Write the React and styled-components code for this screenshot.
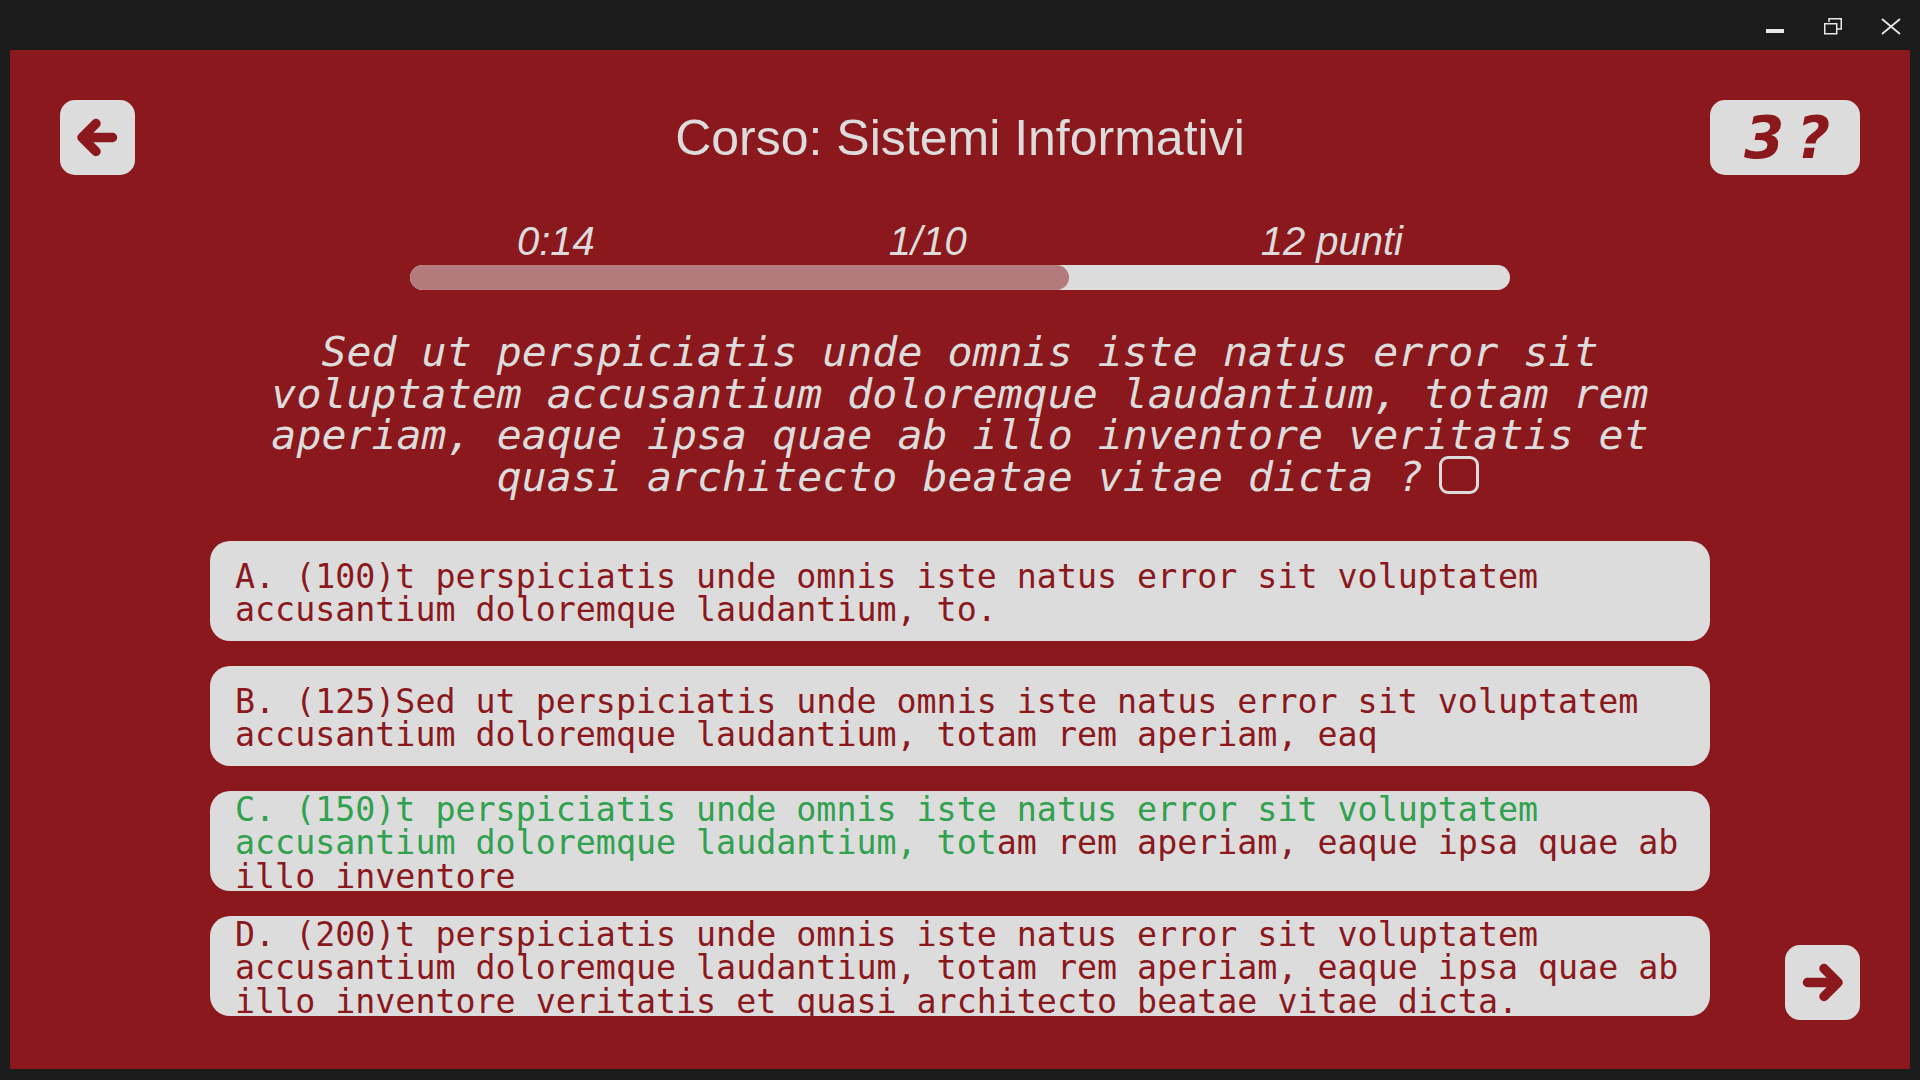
import React from "react";
import styled, { createGlobalStyle } from "styled-components";

const RED = "#8b181c";
const LIGHT = "#dcdcdc";

const GlobalStyle = createGlobalStyle`
  html, body {
    margin: 0;
    padding: 0;
    background: #1c1c1c;
  }
`;

const Frame = styled.div`
  width: 1920px;
  height: 1080px;
  display: flex;
  flex-direction: column;
  background: #1c1c1c;
  overflow: hidden;
`;

const TitleBar = styled.div`
  height: 50px;
  flex-shrink: 0;
  display: flex;
  justify-content: flex-end;
  align-items: flex-start;
`;

const WinButton = styled.div`
  width: 58px;
  height: 50px;
  display: flex;
  justify-content: center;
  padding-top: 16px;
  box-sizing: border-box;
`;

const Window = styled.div`
  flex: 1;
  margin: 0 10px 11px;
  background: ${RED};
  padding: 50px 50px 0;
  box-sizing: border-box;
  display: flex;
  flex-direction: column;
`;

const Header = styled.div`
  height: 75px;
  display: grid;
  grid-template-columns: 150px 1fr 150px;
  align-items: center;
`;

const IconButton = styled.button`
  width: ${(p) => p.$w || 75}px;
  height: 75px;
  border: none;
  padding: 0;
  border-radius: 15px;
  background: ${LIGHT};
  display: grid;
  place-items: center;
  justify-self: ${(p) => p.$side || "start"};
  cursor: pointer;
`;

const Title = styled.h1`
  margin: 0;
  font-family: "Liberation Sans", Arial, sans-serif;
  font-weight: 400;
  font-size: 50px;
  color: ${LIGHT};
  text-align: center;
`;

const HelpText = styled.span`
  font-family: "DejaVu Sans", sans-serif;
  font-weight: bold;
  font-style: italic;
  font-size: 58px;
  color: ${RED};
  letter-spacing: -4px;
  line-height: 1;
`;

const Progress = styled.div`
  width: 1180px;
  margin: 44px auto 0;
  display: flex;
  flex-direction: column;
  align-items: center;
`;

const Labels = styled.div`
  width: 100%;
  display: flex;
  justify-content: space-around;
  font-family: "Liberation Sans", Arial, sans-serif;
  font-style: italic;
  font-size: 40px;
  color: ${LIGHT};
`;

const Bar = styled.div`
  width: 1100px;
  height: 25px;
  margin-top: 1px;
  border-radius: 13px;
  background: ${LIGHT};
  overflow: hidden;
`;

const Fill = styled.div`
  height: 100%;
  border-radius: 13px;
  background: #b37b7b;
`;

const Question = styled.p`
  width: 1500px;
  margin: 41px auto 0;
  font-family: "DejaVu Sans Mono", monospace;
  font-style: italic;
  font-size: 41.6px;
  line-height: 1;
  color: ${LIGHT};
  text-align: center;
`;

const Check = styled.span`
  display: inline-block;
  width: 40px;
  height: 38px;
  box-sizing: border-box;
  border: 3.5px solid ${LIGHT};
  border-radius: 9px;
  margin-left: 16px;
  margin-right: -56px;
  vertical-align: -3px;
`;

const Bottom = styled.div`
  margin-top: 44px;
  display: grid;
  grid-template-columns: 1fr 1500px 1fr;
`;

const Answers = styled.div`
  grid-column: 2;
  display: flex;
  flex-direction: column;
  gap: 25px;
`;

const Answer = styled.div`
  height: 100px;
  display: flex;
  align-items: center;
  padding: 3px 20px 0 25px;
  box-sizing: border-box;
  border-radius: 20px;
  background: ${LIGHT};
  font-family: "DejaVu Sans Mono", monospace;
  font-size: 33.3px;
  line-height: 1;
  color: ${RED};
`;

const Correct = styled.span`
  color: #30a14e;
`;

const NextSlot = styled.div`
  grid-column: 3;
  display: flex;
  justify-content: flex-end;
  align-items: flex-end;
  margin-bottom: -4px;
`;

const Arrow = ({ flip }) => (
  <svg
    width="75"
    height="75"
    viewBox="0 0 75 75"
    style={flip ? { transform: "scaleX(-1)" } : undefined}
  >
    <path
      d="M36 23.5 L22 37.5 L36 51.5 M22 37.5 H52.5"
      fill="none"
      stroke={RED}
      strokeWidth="9.5"
      strokeLinecap="round"
      strokeLinejoin="round"
    />
  </svg>
);

const answers = [
  {
    id: "A",
    parts: [
      [
        "A. (100)t perspiciatis unde omnis iste natus error sit voluptatem accusantium doloremque laudantium, to.",
        false,
      ],
    ],
  },
  {
    id: "B",
    parts: [
      [
        "B. (125)Sed ut perspiciatis unde omnis iste natus error sit voluptatem accusantium doloremque laudantium, totam rem aperiam, eaq",
        false,
      ],
    ],
  },
  {
    id: "C",
    parts: [
      [
        "C. (150)t perspiciatis unde omnis iste natus error sit voluptatem accusantium doloremque laudantium, tot",
        true,
      ],
      ["am rem aperiam, eaque ipsa quae ab illo inventore", false],
    ],
  },
  {
    id: "D",
    parts: [
      [
        "D. (200)t perspiciatis unde omnis iste natus error sit voluptatem accusantium doloremque laudantium, totam rem aperiam, eaque ipsa quae ab illo inventore veritatis et quasi architecto beatae vitae dicta.",
        false,
      ],
    ],
  },
];

const progress = 0.599;

const App = () => {
  return (
    <Frame>
      <GlobalStyle />
      <TitleBar>
        <WinButton>
          <svg width="20" height="20" viewBox="0 0 20 20">
            <rect x="1" y="13" width="18" height="4" fill="#e8e8e8" />
          </svg>
        </WinButton>
        <WinButton>
          <svg width="20" height="20" viewBox="0 0 20 20">
            <path
              d="M6 6 V2.75 H18.25 V13 H14"
              fill="none"
              stroke="#e8e8e8"
              strokeWidth="1.5"
            />
            <rect
              x="1.75"
              y="7.75"
              width="12"
              height="10"
              fill="none"
              stroke="#e8e8e8"
              strokeWidth="1.5"
            />
          </svg>
        </WinButton>
        <WinButton>
          <svg width="20" height="20" viewBox="0 0 20 20">
            <path
              d="M1 3 L19 18 M19 3 L1 18"
              fill="none"
              stroke="#e8e8e8"
              strokeWidth="1.8"
            />
          </svg>
        </WinButton>
      </TitleBar>
      <Window>
        <Header>
          <IconButton>
            <Arrow />
          </IconButton>
          <Title>Corso: Sistemi Informativi</Title>
          <IconButton $w={150} $side="end">
            <HelpText>3 ?</HelpText>
          </IconButton>
        </Header>

        <Progress>
          <Labels>
            <span>0:14</span>
            <span>1/10</span>
            <span>12 punti</span>
          </Labels>
          <Bar>
            <Fill style={{ width: `${progress * 100}%` }} />
          </Bar>
        </Progress>

        <Question>
          Sed ut perspiciatis unde omnis iste natus error sit voluptatem
          accusantium doloremque laudantium, totam rem aperiam, eaque ipsa quae
          ab illo inventore veritatis et quasi architecto beatae vitae dicta ?
          <Check />
        </Question>

        <Bottom>
          <Answers>
            {answers.map((a) => (
              <Answer key={a.id}>
                <div>
                  {a.parts.map(([text, ok], i) =>
                    ok ? <Correct key={i}>{text}</Correct> : <span key={i}>{text}</span>
                  )}
                </div>
              </Answer>
            ))}
          </Answers>
          <NextSlot>
            <IconButton>
              <Arrow flip />
            </IconButton>
          </NextSlot>
        </Bottom>
      </Window>
    </Frame>
  );
};

export default App;
